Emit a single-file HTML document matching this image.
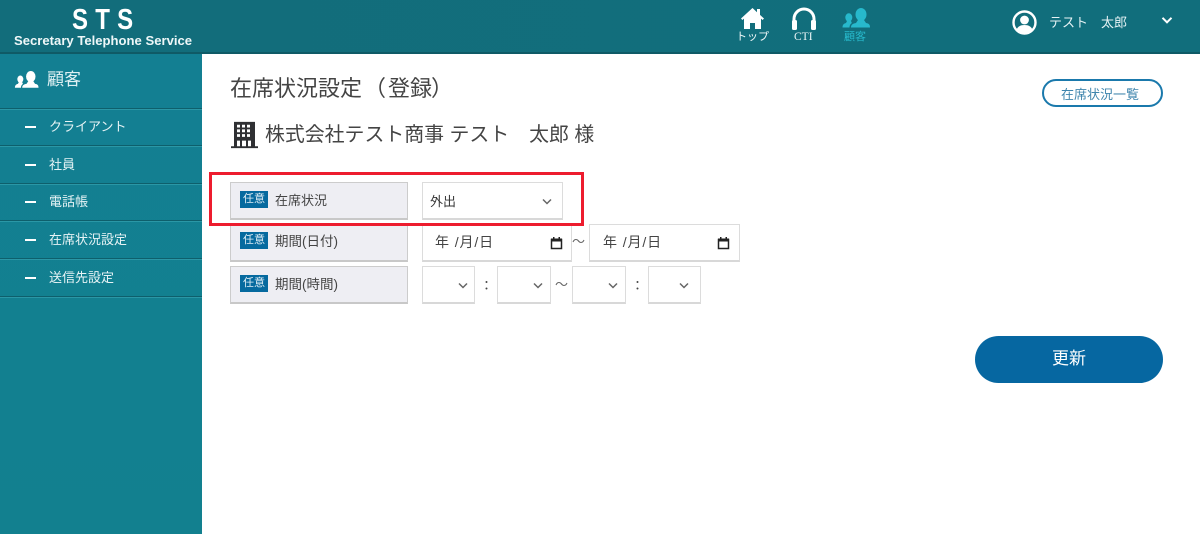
<!DOCTYPE html>
<html lang="ja"><head><meta charset="utf-8"><style>
*{box-sizing:border-box}
html,body{margin:0;padding:0}
body{width:1200px;height:534px;overflow:hidden;position:relative;background:#fff;font-family:"Liberation Sans","Noto Sans CJK JP",sans-serif;color:#333}
.a{position:absolute;white-space:nowrap;line-height:1}
.hd{position:absolute;left:0;top:0;width:1200px;height:54px;background:linear-gradient(90deg,#126d7b,#116e7c);border-bottom:2px solid #0f5a66}
.sb{position:absolute;left:0;top:54px;width:202px;height:480px;background:linear-gradient(180deg,#137f92,#12808f)}
.ln{position:absolute;left:0;width:202px;height:2px;background:linear-gradient(#0e5f6c 50%,#2a97a6 50%)}
.dash{position:absolute;left:25px;width:11px;height:2px;background:#fff}
.mi{position:absolute;left:49px;color:#e6f3f5;font-size:13px;line-height:1;white-space:nowrap}
.lb{position:absolute;left:230px;width:178px;background:#eeeef3;border:1px solid #ccc;border-bottom:2px solid #c8c8c8}
.tag{position:absolute;left:240px;width:28px;height:17px;background:#066a9f;color:#dfeef6;font-size:11px;line-height:17px;text-align:center}
.lt{position:absolute;left:275px;font-size:13.5px;color:#444;line-height:1;white-space:nowrap}
.f{position:absolute;background:#fff;border:1px solid #dcdcdc;border-bottom:2px solid #d8d8d8}
.dt{position:absolute;font-size:14px;color:#444;line-height:1;white-space:nowrap;letter-spacing:.9px}
</style></head><body>
<div class="hd"></div>
<div class="a" style="left:72px;top:6px;font-size:24px;font-weight:700;color:#fff;letter-spacing:7.2px;transform:scaleY(1.2);transform-origin:0 0">STS</div>
<div class="a" style="left:14px;top:34px;font-size:13.1px;font-weight:700;color:#eef7f8">Secretary Telephone Service</div>

<svg class="a" style="left:740px;top:7px" width="25" height="23" viewBox="0 0 25 23"><path fill="#fff" d="M12.500 1 1 11.500l1.400 1.500L4 11.600V22h6v-6h5v6h6V11.600l1.600 1.400 1.400-1.500-4-3.600V2h-3v3.200z"/></svg>
<div class="a" style="left:736px;top:32px;font-size:11px;color:#eef7f8">トップ</div>
<svg class="a" style="left:791px;top:7px" width="26" height="24" viewBox="0 0 26 24"><path fill="none" stroke="#fff" stroke-width="3" d="M3 17V12a10 10 0 0 1 20 0v5"/><rect x="1" y="13" width="5" height="10" rx="1.500" fill="#fff"/><rect x="20" y="13" width="5" height="10" rx="1.500" fill="#fff"/></svg>
<div class="a" style="left:794px;top:32px;font-size:11.500px;color:#eef7f8;font-family:'Liberation Serif',serif">CTI</div>
<svg class="a" style="left:842px;top:8px" width="28" height="21" viewBox="0 0 28 21"><g fill="#27b9cc"><ellipse cx="19" cy="6.500" rx="5.500" ry="6.500"/><path d="M9 19.500c0-3 2-4 5-4.500l2-3h6l2 3c3 .5 4 1.500 4 4.500z"/><ellipse cx="6.800" cy="9.500" rx="3.500" ry="4.200"/><path d="M.5 19.500c0-3 1.500-4 3.500-4.500l1-2h4l.8 2c-1.500 1-2.300 2.500-2.300 4.500z"/></g></svg>
<div class="a" style="left:844px;top:32px;font-size:11px;color:#27b9cc">顧客</div>

<svg class="a" style="left:1012px;top:10px" width="25" height="25" viewBox="0 0 25 25"><circle cx="12.500" cy="12.500" r="11" fill="#126d7b" stroke="#fff" stroke-width="2.400"/><circle cx="12.500" cy="10" r="4.400" fill="#fff"/><path fill="#fff" d="M4.500 20c1-3.500 4-5 8-5s7 1.500 8 5a11 11 0 0 1-16 0z"/></svg>
<div class="a" style="left:1049px;top:16px;font-size:13px;color:#e6f3f5">テスト　太郎</div>
<svg class="a" style="left:1161px;top:16px" width="12" height="9" viewBox="0 0 12 9"><path d="M1.500 1.800 6 6.300l4.500-4.500" fill="none" stroke="#fff" stroke-width="2"/></svg>

<div class="sb"></div>
<svg class="a" style="left:14px;top:71px" width="25" height="18" viewBox="0 0 28 21"><g fill="#fff"><ellipse cx="19" cy="6.500" rx="5.500" ry="6.500"/><path d="M9 19.500c0-3 2-4 5-4.500l2-3h6l2 3c3 .5 4 1.500 4 4.500z"/><ellipse cx="6.800" cy="9.500" rx="3.500" ry="4.200"/><path d="M.5 19.500c0-3 1.500-4 3.500-4.500l1-2h4l.8 2c-1.500 1-2.300 2.500-2.300 4.500z"/></g></svg>
<div class="a" style="left:47px;top:71px;font-size:17px;color:#dff0f3">顧客</div>
<div class="ln" style="top:108px"></div>
<div class="ln" style="top:145px"></div>
<div class="ln" style="top:183px"></div>
<div class="ln" style="top:220px"></div>
<div class="ln" style="top:258px"></div>
<div class="ln" style="top:296px"></div>
<div class="dash" style="top:126px"></div><div class="mi" style="top:120px">クライアント</div>
<div class="dash" style="top:164px"></div><div class="mi" style="top:158px">社員</div>
<div class="dash" style="top:201px"></div><div class="mi" style="top:195px">電話帳</div>
<div class="dash" style="top:239px"></div><div class="mi" style="top:233px">在席状況設定</div>
<div class="dash" style="top:277px"></div><div class="mi" style="top:271px">送信先設定</div>

<div class="a" style="left:230px;top:78px;font-size:22px;color:#444">在席状況設定<span style="margin-left:2px;letter-spacing:2px">（</span>登録<span style="margin-left:-1px">）</span></div>
<div class="a" style="left:1042px;top:79px;width:121px;height:28px;border:2px solid #1a79ac;border-radius:14px;padding:0 5px 0 0;text-align:center;line-height:28px;font-size:13px;color:#3f85ad">在席状況一覧</div>
<svg class="a" style="left:230.500px;top:121px" width="27" height="28" viewBox="0 0 27 30" preserveAspectRatio="none"><path fill="#2f3033" fill-rule="evenodd" d="M3 1h21v26h3v2H0v-2h3zM6 4v3h3V4zm5 0v3h3V4zm5 0v3h3V4zm-10 5v3h3V9zm5 0v3h3V9zm5 0v3h3V9zM6 14v3h3v-3zm5 0v3h3v-3zm5 0v3h3v-3zM6 21v6h3v-6zm5 0v6h4v-6zm6 0v6h3v-6z"/></svg>
<div class="a" style="left:265px;top:126px;font-size:19.900px;color:#444">株式会社テスト商事 テスト　太郎 様</div>

<div class="lb" style="top:182px;height:38px"></div>
<div class="tag" style="top:191px">任意</div><div class="lt" style="top:194px;font-size:13px">在席状況</div>
<div class="f" style="left:422px;top:182px;width:141px;height:38px"></div>
<div class="a" style="left:430px;top:195px;font-size:13px;color:#333">外出</div>
<svg class="a" style="left:541px;top:198px" width="12" height="8" viewBox="0 0 12 8"><path d="M2 1.500 6 5.500l4-4" fill="none" stroke="#666" stroke-width="1.500"/></svg>

<div class="lb" style="top:224px;height:38px"></div>
<div class="tag" style="top:232px">任意</div><div class="lt" style="top:235px">期間(日付)</div>
<div class="f" style="left:422px;top:224px;width:150px;height:38px"></div>
<div class="dt" style="left:435px;top:235px">年 /月/日</div>
<svg class="a" style="left:550px;top:236px" width="13" height="14" viewBox="0 0 13 14"><path fill="none" stroke="#222" stroke-width="1.500" d="M1.500 3.500h10v9h-10z"/><path fill="#222" d="M1 2.500h11v3H1zM3 1h1.500v2H3zM8.500 1H10v2H8.500z"/></svg>
<div class="a" style="left:572px;top:235px;font-size:13px;color:#666">～</div>
<div class="f" style="left:589px;top:224px;width:151px;height:38px"></div>
<div class="dt" style="left:603px;top:235px">年 /月/日</div>
<svg class="a" style="left:717px;top:236px" width="13" height="14" viewBox="0 0 13 14"><path fill="none" stroke="#222" stroke-width="1.500" d="M1.500 3.500h10v9h-10z"/><path fill="#222" d="M1 2.500h11v3H1zM3 1h1.500v2H3zM8.500 1H10v2H8.500z"/></svg>

<div class="lb" style="top:266px;height:38px"></div>
<div class="tag" style="top:275px">任意</div><div class="lt" style="top:278px">期間(時間)</div>
<div class="f" style="left:422px;top:266px;width:53px;height:38px"></div>
<svg class="a" style="left:457px;top:282px" width="12" height="8" viewBox="0 0 12 8"><path d="M2 1.500 6 5.500l4-4" fill="none" stroke="#666" stroke-width="1.500"/></svg>
<div class="a" style="left:480px;top:279px;font-size:13px;color:#444">：</div>
<div class="f" style="left:497px;top:266px;width:54px;height:38px"></div>
<svg class="a" style="left:532px;top:282px" width="12" height="8" viewBox="0 0 12 8"><path d="M2 1.500 6 5.500l4-4" fill="none" stroke="#666" stroke-width="1.500"/></svg>
<div class="a" style="left:555px;top:278px;font-size:13px;color:#666">～</div>
<div class="f" style="left:572px;top:266px;width:54px;height:38px"></div>
<svg class="a" style="left:607px;top:282px" width="12" height="8" viewBox="0 0 12 8"><path d="M2 1.500 6 5.500l4-4" fill="none" stroke="#666" stroke-width="1.500"/></svg>
<div class="a" style="left:631px;top:279px;font-size:13px;color:#444">：</div>
<div class="f" style="left:648px;top:266px;width:53px;height:38px"></div>
<svg class="a" style="left:678px;top:282px" width="12" height="8" viewBox="0 0 12 8"><path d="M2 1.500 6 5.500l4-4" fill="none" stroke="#666" stroke-width="1.500"/></svg>

<div class="a" style="left:209px;top:172px;width:375px;height:54px;border:3px solid #ed1c2e"></div>

<div class="a" style="left:975px;top:336px;width:188px;height:47px;background:#0667a1;border-radius:24px;color:#fff;font-size:17px;text-align:center;line-height:46px">更新</div>
</body></html>
